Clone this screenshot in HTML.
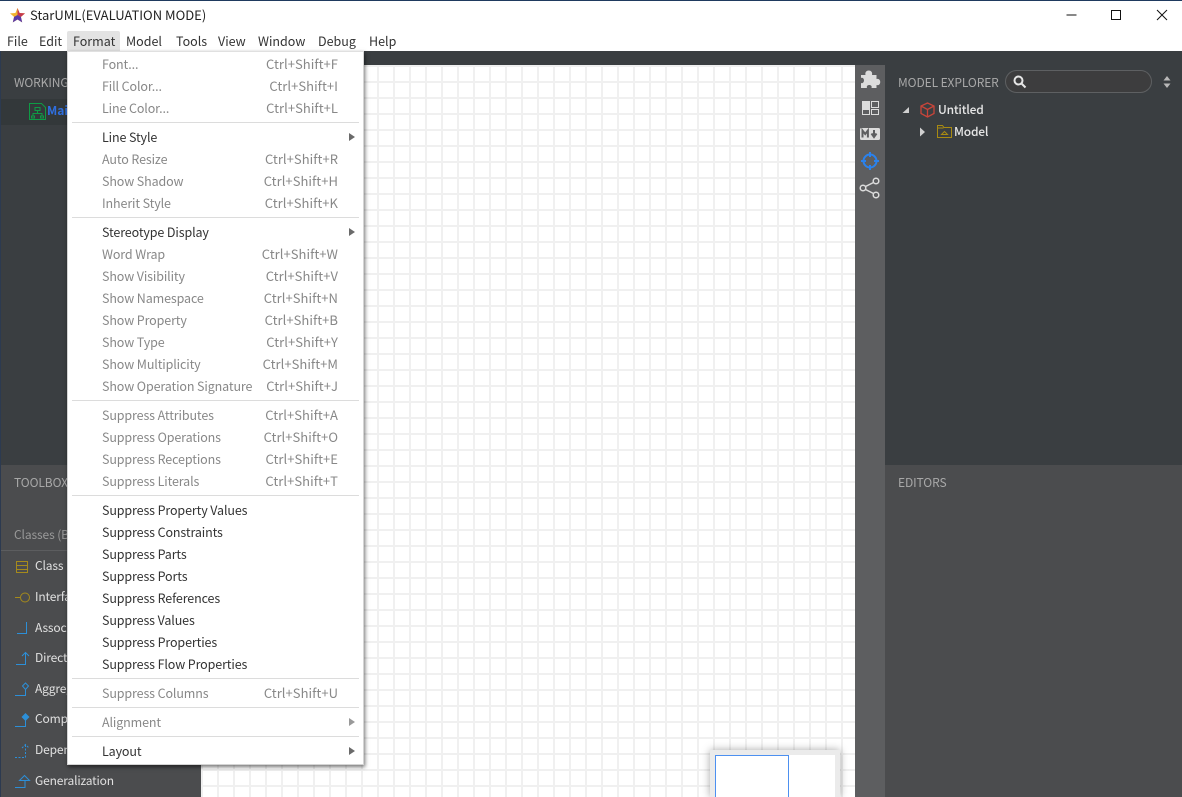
<!DOCTYPE html>
<html><head><meta charset="utf-8"><style>
*{box-sizing:border-box}
html,body{margin:0;padding:0;width:1182px;height:797px;overflow:hidden;background:#fff}
body{position:relative;font-family:"Noto Sans CJK SC","Liberation Sans",sans-serif;font-size:13px}
.a{position:absolute;white-space:nowrap}
.mb span{position:absolute;top:32px;line-height:18px;color:#333;font-size:12.500px}
.m{position:absolute;left:67px;top:51px;width:297px;height:714px;background:#fff;border:1px solid #d4d4d4;border-top-color:#e0e0e0;box-shadow:1px 2px 4px rgba(0,0,0,.55);padding-top:1px;z-index:5}
.r{height:22px;line-height:22px;position:relative;color:#333}
.r.d{color:#888}
.r b{font-weight:400;position:absolute;left:34px;top:0;font-size:12.500px;letter-spacing:-.12px}
.r i{font-style:normal;position:absolute;right:25px;top:0;letter-spacing:.04px}
.r u{position:absolute;left:281px;top:7px;width:0;height:0;border-left:6px solid #6a6a6a;border-top:4px solid transparent;border-bottom:4px solid transparent}
.s{height:7px;position:relative}
.s:after{content:"";position:absolute;left:4px;right:4px;top:3px;height:1px;background:#dcdcdc}
.p{color:#a8a8a8;font-size:12px;letter-spacing:-.1px}
.t{color:#e0e0e0;font-size:12px;letter-spacing:-.15px}
.w{color:#e6e6e6;font-weight:500;font-size:12px;letter-spacing:-.2px}
</style></head><body>
<div class="a" style="left:0;top:0;width:1182px;height:1px;background:#1f3a5f"></div>
<svg class="a" style="left:9px;top:7px" width="17" height="17" viewBox="0 0 17 17"><polygon points="8.500,1 10.600,6 16,6.400 11.900,9.900 13.200,15.400 8.500,12.500 3.800,15.400 5.100,9.900 1,6.400 6.400,6" fill="#f2b530"/><polygon points="8.500,1 10.600,6 16,6.400 11.900,9.900 8.500,8" fill="#c4394f"/><polygon points="3.800,15.400 8.500,12.500 13.200,15.400 11.900,9.900 8.500,8 5.100,9.900" fill="#5a3aa8"/></svg>
<div class="a" style="left:30px;top:6px;line-height:18px;color:#222">StarUML(EVALUATION MODE)</div>
<svg class="a" style="left:1060px;top:0" width="122" height="30" fill="none" stroke="#111"><path d="M6.500 15h10"/><rect x="51.500" y="10.500" width="9" height="9" stroke-width="1"/><path d="M97 10l10 10M107 10l-10 10"/></svg>
<div class="mb">
<div class="a" style="left:67px;top:31px;width:53px;height:20px;background:#e3e3e3;border-radius:2px 2px 0 0"></div>
<span style="left:7px">File</span><span style="left:39px">Edit</span><span style="left:73px">Format</span><span style="left:126px">Model</span><span style="left:176px">Tools</span><span style="left:218px">View</span><span style="left:258px">Window</span><span style="left:318px">Debug</span><span style="left:369px">Help</span>
</div>

<!-- panels -->
<div class="a" style="left:0;top:51px;width:1182px;height:14px;background:#3a3e41"></div>
<div class="a" style="left:0;top:65px;width:201px;height:400px;background:#3a3e41"></div>
<div class="a" style="left:0;top:465px;width:201px;height:332px;background:#4b4c4e"></div>
<div class="a" style="left:0;top:51px;width:1px;height:746px;background:#2c3a50"></div>
<div class="a" style="left:1px;top:99px;width:200px;height:26px;background:#33383a"></div>
<div class="a p" style="left:14px;top:74px;line-height:18px">WORKING</div>
<svg class="a" style="left:29px;top:103px" width="17" height="17" fill="none" stroke="#0f9a45"><path d="M.5 .5h12l4 4v12H.5z"/><path d="M6 4.500h5v3H6zM8.500 7.500v3M4 13v-2.500h9V13M2.500 13h3v2h-3zM11.500 13h3v2h-3z"/></svg>
<div class="a" style="left:47px;top:102px;line-height:18px;color:#2f6fe0;font-weight:700;font-size:12px">Main</div>

<div class="a p" style="left:14px;top:474px;line-height:18px">TOOLBOX</div>
<div class="a p" style="left:14px;top:526px;line-height:18px;color:#999">Classes (Basic)</div>
<div class="a" style="left:1px;top:550px;width:200px;height:1px;background:#5c5d5f"></div>
<svg class="a" style="left:14px;top:555px" width="22" height="240" fill="none" stroke="#2c8fd8">
<g stroke="#a58a1c"><path d="M2.500 6.500h11v11h-11zM2.500 10.500h11M2.500 14.500h11"/><path d="M1 42.500h5"/><circle cx="11" cy="42.500" r="4.500"/></g>
<path d="M3 78.500h9.500V67"/>
<path d="M2 109.500h9.500V98M8 101l3.500-3.500L15 101"/>
<path d="M1 140.500h10.500V134.500"/><path d="M8.500 131l3-3 3 3-3 3.500z"/>
<path d="M1 171.500h10.500V165"/><path d="M7.500 162l4-4 4 4-4 4z" fill="#2c8fd8" stroke="none"/>
<path d="M1 202.500h10.500V190M8 193l3.500-3.500L15 193" stroke-dasharray="2 1.500"/>
<path d="M1 232.500h10v-7M5.500 225.500l5-5 5 5z"/>
</svg>
<div class="a t" style="left:35px;top:557px;line-height:18px">Class</div>
<div class="a t" style="left:35px;top:588px;line-height:18px">Interface</div>
<div class="a t" style="left:35px;top:619px;line-height:18px">Association</div>
<div class="a t" style="left:35px;top:649px;line-height:18px">Directed</div>
<div class="a t" style="left:35px;top:680px;line-height:18px">Aggregation</div>
<div class="a t" style="left:35px;top:710px;line-height:18px">Composition</div>
<div class="a t" style="left:35px;top:741px;line-height:18px">Dependency</div>
<div class="a t" style="left:35px;top:772px;line-height:18px">Generalization</div>

<!-- canvas -->
<div class="a" style="left:201px;top:65px;width:654px;height:732px;background-color:#fff;background-image:linear-gradient(#f0f0f0 2px,transparent 2px),linear-gradient(90deg,#f0f0f0 2px,transparent 2px);background-size:16px 16px;background-position:0 16px,0 0"></div>
<div class="a" style="left:710px;top:750px;width:130px;height:47px;background:#ebebeb;box-shadow:0 0 8px rgba(0,0,0,.35)"></div>
<div class="a" style="left:715px;top:755px;width:120px;height:42px;background:#fff"></div>
<div class="a" style="left:715px;top:755px;width:74px;height:42px;border:1px solid #4d90f0;border-bottom:0"></div>

<!-- right -->
<div class="a" style="left:855px;top:65px;width:30px;height:732px;background:#5d5e60"></div>
<div class="a" style="left:885px;top:65px;width:297px;height:400px;background:#3a3e41"></div>
<div class="a" style="left:885px;top:465px;width:297px;height:332px;background:#4b4c4e"></div>
<svg class="a" style="left:855px;top:65px" width="30" height="140" fill="none" stroke="#dcdcdc">
<path d="M6 10h4.500c-1.500-6 8-6 6.500 0h4.500v4c5-1.500 5 7.500 0 6v3h-5c1.500-4-6-4-4.500 0H6v-5c4 1.500 4-6.500 0-5z" fill="#dcdcdc" stroke="none"/>
<rect x="7.500" y="36.500" width="7" height="7" fill="#dcdcdc"/><path d="M16.500 36.500h7v6h-7zM7.500 44.500h7v5h-7zM16.500 44.500h7v5h-7z"/>
<rect x="5" y="63" width="20" height="12" rx="1.500" fill="#dcdcdc" stroke="none"/>
<path d="M7.500 72.500v-7l2.700 3.500 2.700-3.500v7" stroke="#5d5e60" stroke-width="2"/><path d="M19 65v5.500M16.500 68.500l2.500 3.500 2.500-3.500" stroke="#5d5e60" stroke-width="2"/>
<g stroke="#2a82ee" stroke-width="2"><circle cx="15" cy="96" r="6.500"/><path d="M15 87v5M15 100v5M6 96h5M19 96h5"/></g>
<g stroke-width="1.500"><circle cx="8" cy="123" r="2.800"/><circle cx="21" cy="116" r="2.800"/><circle cx="21" cy="130" r="2.800"/><path d="M10.500 121.500l8-4M10.500 124.500l8 4"/></g>
</svg>
<div class="a p" style="left:898px;top:74px;line-height:18px">MODEL EXPLORER</div>
<div class="a" style="left:1005px;top:70px;width:147px;height:23px;border:1px solid #5e6062;border-radius:12px;background:#3d3d3e"></div>
<svg class="a" style="left:1012px;top:74px" width="16" height="16" fill="none" stroke="#e6e6e6" stroke-width="2"><circle cx="6.500" cy="6.500" r="4"/><path d="M9.500 9.500l4 4"/></svg>
<svg class="a" style="left:1162px;top:75px" width="10" height="14" fill="#b8b8b8"><path d="M5 1l3.500 4.500h-7zM5 13L1.500 8.500h7z"/></svg>
<svg class="a" style="left:900px;top:104px" width="12" height="12" fill="#d0d0d0"><path d="M9 3v6H2.500z"/></svg>
<svg class="a" style="left:920px;top:102px" width="16" height="16" fill="none" stroke="#c8453a" stroke-width="1.300"><path d="M7.500 1l6.500 3v7.500L7.500 15 1 11.500V4zM1 4l6.500 3.500L14 4M7.500 7.500V15"/></svg>
<div class="a w" style="left:938px;top:101px;line-height:18px">Untitled</div>
<svg class="a" style="left:918px;top:126px" width="10" height="12" fill="#d0d0d0"><path d="M2 1.500l5 4.500-5 4.500z"/></svg>
<svg class="a" style="left:937px;top:125px" width="15" height="13" fill="none" stroke="#a88a12"><path d="M.5 12.500v-12h5l1.500 2h7.500v10zM.5 3h6"/><path d="M4.500 9.500l3-3 3 3z"/></svg>
<div class="a w" style="left:954px;top:123px;line-height:18px">Model</div>
<div class="a p" style="left:898px;top:474px;line-height:18px">EDITORS</div>

<!-- menu -->
<div class="m">
<div class="r d"><b>Font...</b><i>Ctrl+Shift+F</i></div>
<div class="r d"><b>Fill Color...</b><i>Ctrl+Shift+I</i></div>
<div class="r d"><b>Line Color...</b><i>Ctrl+Shift+L</i></div>
<div class="s"></div>
<div class="r"><b>Line Style</b><u></u></div>
<div class="r d"><b>Auto Resize</b><i>Ctrl+Shift+R</i></div>
<div class="r d"><b>Show Shadow</b><i>Ctrl+Shift+H</i></div>
<div class="r d"><b>Inherit Style</b><i>Ctrl+Shift+K</i></div>
<div class="s"></div>
<div class="r"><b>Stereotype Display</b><u></u></div>
<div class="r d"><b>Word Wrap</b><i>Ctrl+Shift+W</i></div>
<div class="r d"><b>Show Visibility</b><i>Ctrl+Shift+V</i></div>
<div class="r d"><b>Show Namespace</b><i>Ctrl+Shift+N</i></div>
<div class="r d"><b>Show Property</b><i>Ctrl+Shift+B</i></div>
<div class="r d"><b>Show Type</b><i>Ctrl+Shift+Y</i></div>
<div class="r d"><b>Show Multiplicity</b><i>Ctrl+Shift+M</i></div>
<div class="r d"><b>Show Operation Signature</b><i>Ctrl+Shift+J</i></div>
<div class="s"></div>
<div class="r d"><b>Suppress Attributes</b><i>Ctrl+Shift+A</i></div>
<div class="r d"><b>Suppress Operations</b><i>Ctrl+Shift+O</i></div>
<div class="r d"><b>Suppress Receptions</b><i>Ctrl+Shift+E</i></div>
<div class="r d"><b>Suppress Literals</b><i>Ctrl+Shift+T</i></div>
<div class="s"></div>
<div class="r"><b>Suppress Property Values</b></div>
<div class="r"><b>Suppress Constraints</b></div>
<div class="r"><b>Suppress Parts</b></div>
<div class="r"><b>Suppress Ports</b></div>
<div class="r"><b>Suppress References</b></div>
<div class="r"><b>Suppress Values</b></div>
<div class="r"><b>Suppress Properties</b></div>
<div class="r"><b>Suppress Flow Properties</b></div>
<div class="s"></div>
<div class="r d"><b>Suppress Columns</b><i>Ctrl+Shift+U</i></div>
<div class="s"></div>
<div class="r d"><b>Alignment</b><u style="border-left-color:#999"></u></div>
<div class="s"></div>
<div class="r"><b>Layout</b><u></u></div>
</div>
</body></html>
